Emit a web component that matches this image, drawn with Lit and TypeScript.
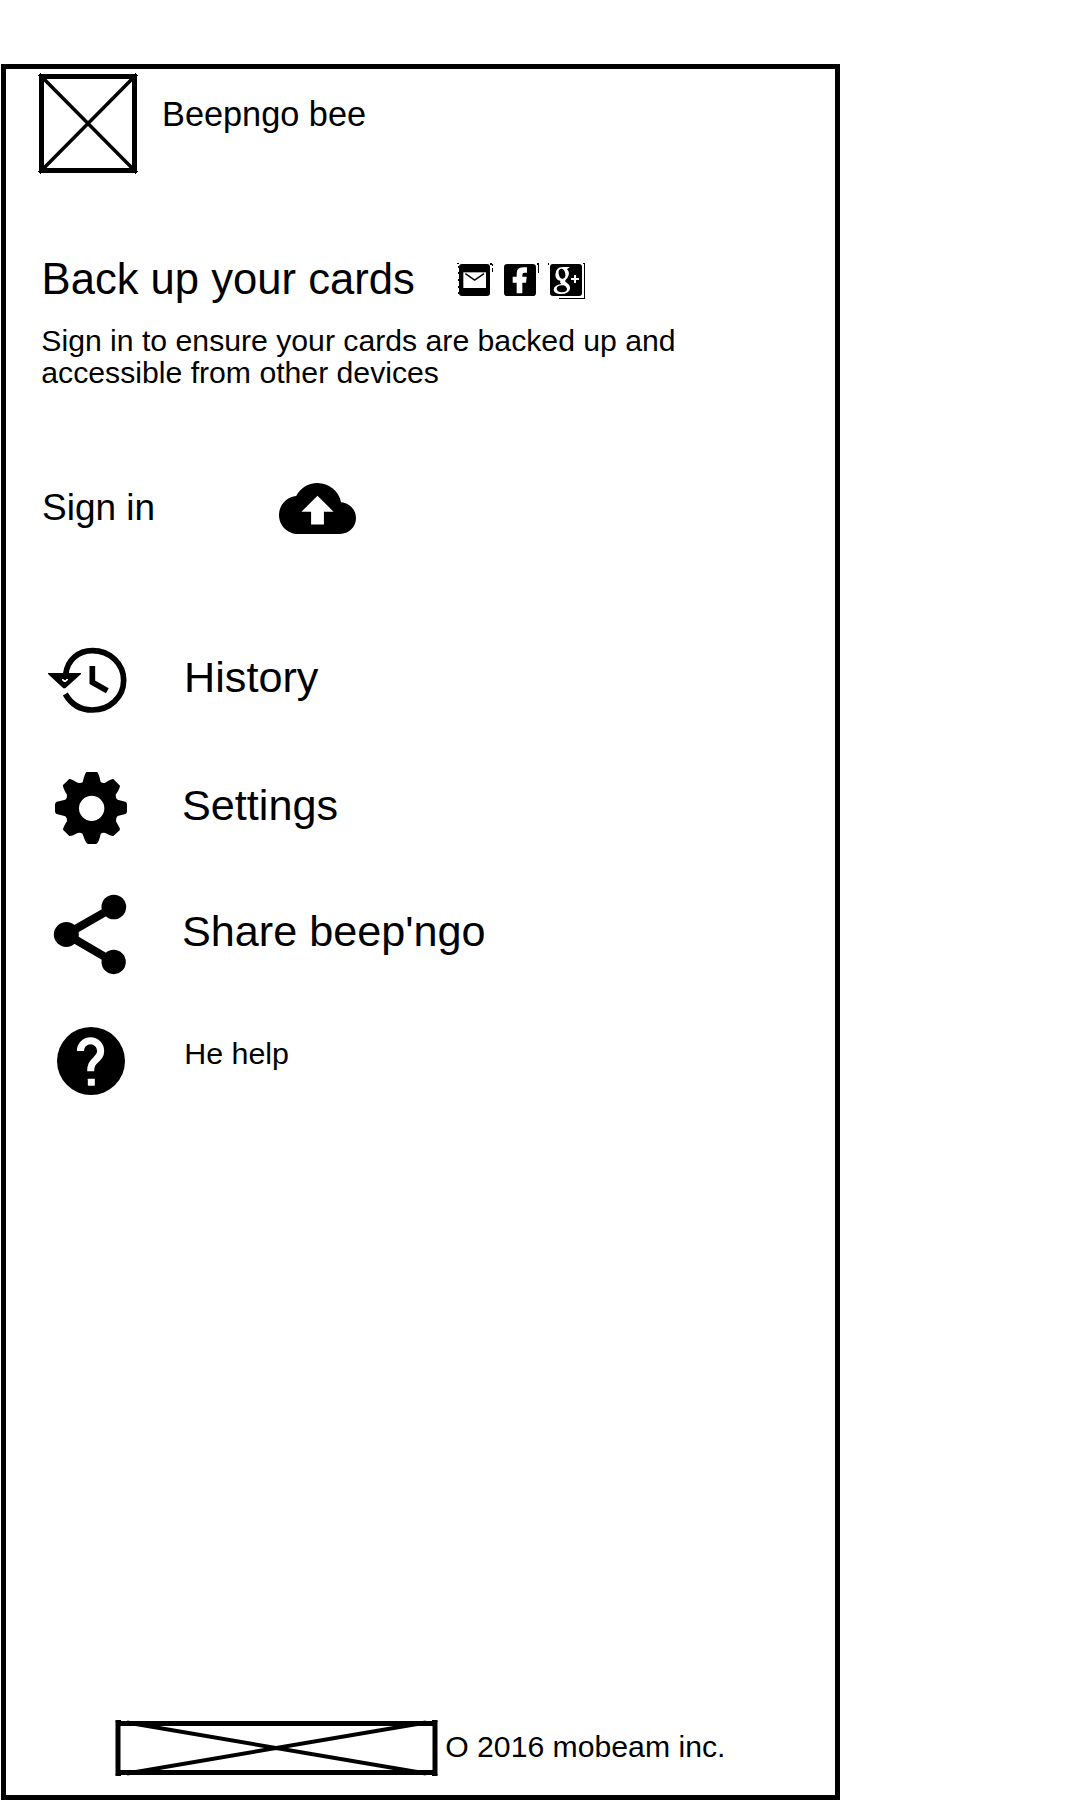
import { LitElement, html, svg, css } from "lit";
import { customElement } from "lit/decorators.js";

// Icon drawings use three units per CSS pixel.
const history = svg`
  <path d="M107 133C112 90 145 62 187 62C240 62 281 101 281 151C281 201 240 240 187 240C152 240 123 222 106 192" fill="none" stroke="#000" stroke-width="17"/>
  <path d="M54 129H153V132L106 175H100L54 132Z"/>
  <path d="M96 147H101V150H108V147H114V150L107 156H102L96 151Z" fill="#fff"/>
  <path d="M187 108V157L232 182" fill="none" stroke="#000" stroke-width="17"/>`;

const settings = svg`
  <path fill-rule="evenodd" d="M169 66H201Q206 68 212 96Q219 101 226 98Q242 87 250 87L270 107Q270 115 257 134Q256 144 263 149L286 155Q291 157 291 162V184Q291 190 286 192L263 198Q256 204 258 214L270 236L269 241L250 258Q244 259 226 249Q217 246 212 252Q206 281 198 282H174Q167 281 158 252Q152 246 143 249Q126 259 118 258L99 239Q99 232 111 214Q112 203 106 199L80 192Q75 190 75 184V163Q75 158 80 155L106 149Q112 144 111 134Q98 114 99 105L118 87Q126 88 143 98Q151 101 158 97Q165 68 169 66Z
  M185 137A38 38 0 1 0 185 213A38 38 0 1 0 185 137Z"/>`;

const share = svg`
  <path d="M252 81L109 163L251 246" fill="none" stroke="#000" stroke-width="25"/>
  <circle cx="251.500" cy="81" r="37"/>
  <circle cx="109" cy="163.500" r="37.500"/>
  <circle cx="251" cy="246" r="36.500"/>`;

const help = svg`
  <circle cx="183" cy="153" r="102"/>
  <path d="M151 123A30.500 31 0 0 1 212 123C212 135 206 141 197 150C186 160 182 166 182 184" fill="none" stroke="#fff" stroke-width="21"/>
  <rect x="173.500" y="206" width="21" height="21" rx="2" fill="#fff"/>`;

const menu = [
  { cls: "history", label: "History", box: "54 54 240 216", icon: history },
  { cls: "settings", label: "Settings", box: "54 66 240 216", icon: settings },
  { cls: "share", label: "Share beep'ngo", box: "54 42 240 243", icon: share },
  { cls: "help", label: "He help", box: "54 51 240 207", icon: help },
];

@customElement("app-root")
export class AppRoot extends LitElement {
  static styles = css`
    :host { display: block; width: 1080px; height: 1800px; background: #fff; color: #000;
      font-family: "Liberation Sans", Arial, sans-serif; overflow: hidden; }
    * { box-sizing: border-box; }
    svg { display: block; flex: none; overflow: visible; }
    .screen { display: flow-root; }
    .frame { display: flex; flex-direction: column; width: 839px; height: 1736px;
      margin: 64px 0 0 1px; border: 5px solid #000; }
    .row { display: flex; align-items: flex-start; white-space: nowrap; }
    .header { padding: 4px 0 0 32px; height: 185px; }
    .avatar { width: 100px; height: 101px; }
    .name { margin: 21px 0 0 24px; font-size: 34.3px; line-height: 40px; }
    .backup { padding-left: 35.600px; height: 70px; }
    .heading { width: 415.400px; margin: 0; font-weight: 400; font-size: 43.6px; line-height: 50px; }
    .social { width: 130px; height: 38px; margin-top: 8px; }
    .note { margin: 0; padding: 1px 0 0 35.300px; height: 159px; font-size: 30.200px; line-height: 32px; white-space: nowrap; }
    .signin { padding-left: 36px; height: 165px; }
    .signin-label { width: 237px; margin-top: 3px; font-size: 37px; line-height: 44px; }
    .cloud { width: 77px; height: 51px; }
    .menu { list-style: none; margin: 0; padding: 0 0 0 42px; flex: 1; }
    .item { display: grid; grid-template-columns: 80px auto; column-gap: 54px; align-items: start; font-size: 43.200px; line-height: 50px; }
    .item.history { height: 124px; }
    .item.settings { height: 122px; }
    .item.share { height: 133px; }
    .history .label { padding: 4px 0 0 2px; }
    .settings .label { padding-top: 8px; }
    .share .label { padding-top: 12px; }
    .help .label { padding: 8px 0 0 2.200px; font-size: 30.400px; line-height: 36px; }
    .history svg, .settings svg { width: 80px; height: 72px; }
    .share svg { width: 80px; height: 81px; }
    .help svg { width: 80px; height: 69px; }
    .footer { padding: 0 0 18px 109px; }
    .banner { width: 323px; height: 58px; }
    .copy { margin: 10px 0 0 7.200px; font-size: 30.200px; line-height: 36px; }
  `;

  render() {
    return html`
      <main class="screen"><div class="frame">
        <header class="row header">
          <svg class="avatar" viewBox="0 0 100 101">
            <path d="M3.500 3.500L96.500 97.500M96.500 3.500L3.500 97.500" stroke="#000" stroke-width="3.500"/>
            <rect x="3.500" y="3.500" width="93" height="94" fill="none" stroke="#000" stroke-width="5"/>
            <path d="M0 2h1v1h-1zM2 0h1v1h-1zM98 2h2v1h-2zM97 0h1v1h-1zM0 98h1v1h-1zM2 100h1v1h-1zM99 98h1v1h-1zM97 100h1v1h-1z"/>
          </svg>
          <div class="name">Beepngo bee</div>
        </header>
        <section class="row backup">
          <h1 class="heading">Back up your cards</h1>
          <svg class="social" viewBox="51 36 390 114">
            <rect x="57" y="42" width="93" height="96" rx="9"/>
            <path d="M70 67H138V114H70Z" fill="#fff"/>
            <path d="M76 71L104 90L132 71" fill="none" stroke="#000" stroke-width="4.500"/>
            <path d="M51 39h6v3h-6zM54 48h3v6h-3zM54 66h3v6h-3zM54 87h3v6h-3zM54 108h3v6h-3zM54 126h3v6h-3zM150 39h6v6h-6zM156 42h3v6h-3zM156 54h3v12h-3z"/>
            <rect x="192" y="42" width="96" height="96" rx="10"/>
            <path d="M230 130V98H218V80H230V71Q230 52 249 52H261V68H253Q247 68 247 75V80H260L258 98H247V130Z" fill="#fff"/>
            <path d="M291 39h6v30h-3v-24h-3z"/>
            <rect x="330" y="42" width="96" height="96" rx="9"/>
            <path fill-rule="evenodd" fill="#fff" d="M389 51L381 58Q389 66 386 75Q384 84 377 89Q373 94 381 99Q391 106 390 116Q387 131 363 132Q341 131 341 119Q342 105 364 102Q358 98 361 92Q347 91 346 74Q347 52 368 51ZM364 56Q354 58 356 71Q359 87 368 86Q378 84 376 71Q373 56 364 56ZM367 106Q350 107 350 116Q351 126 366 127Q382 126 381 116Q379 109 371 106Z"/>
            <path d="M393 87H417M405 75V99" stroke="#fff" stroke-width="6"/>
            <path d="M324 39h3v6h-3zM429 39h6v108h-78v-3h75v-102h-3z"/>
          </svg>
        </section>
        <p class="note">Sign in to ensure your cards are backed up and<br>accessible from other devices</p>
        <section class="row signin">
          <div class="signin-label">Sign in</div>
          <svg class="cloud" viewBox="0 4 24 16" preserveAspectRatio="none">
            <path d="M19.350 10.040C18.670 6.590 15.640 4 12 4 9.110 4 6.600 5.640 5.350 8.040 2.340 8.360 0 10.910 0 14c0 3.310 2.690 6 6 6h13c2.760 0 5-2.240 5-5 0-2.640-2.050-4.780-4.650-4.960zM14 13v4h-4v-4H7l5-5 5 5h-3z"/>
          </svg>
        </section>
        <ul class="menu">
          ${menu.map((m) => html`<li class="item ${m.cls}">
            <svg viewBox=${m.box}>${m.icon}</svg><span class="label">${m.label}</span>
          </li>`)}
        </ul>
        <footer class="row footer">
          <svg class="banner" viewBox="0 0 323 58">
            <path d="M12 3.500L311 54.500M311 3.500L12 54.500" stroke="#000" stroke-width="4"/>
            <rect x="3" y="4.500" width="317" height="49" fill="none" stroke="#000" stroke-width="5"/>
            <path d="M.5 1H6V3H.5ZM317 1H322.500V3H317ZM.5 55H6V57H.5ZM317 55H322.500V57H317Z"/>
          </svg>
          <div class="copy">O 2016 mobeam inc.</div>
        </footer>
      </div></main>
    `;
  }
}
